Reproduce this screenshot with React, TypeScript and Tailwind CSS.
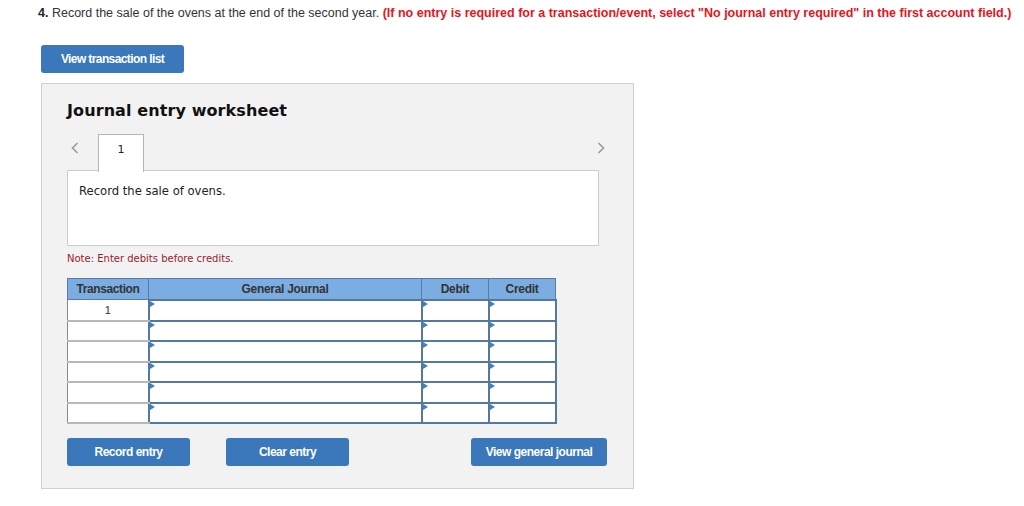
import React from "react";

const arial = { fontFamily: '"Liberation Sans", Arial, sans-serif' };

function InputCell({ w }: { w: string }) {
  return (
    <td className={`${w} p-0 border-2 border-[#55789f] bg-white relative`}>
      <span className="absolute left-0 top-0 w-0 h-0 border-t-[3px] border-b-[3px] border-l-[5px] border-t-transparent border-b-transparent border-l-[#3d7fca]" />
    </td>
  );
}

export default function App() {
  const rows = ["1", "", "", "", "", ""];
  return (
    <div className="w-[1024px] h-[506px] bg-white relative" style={arial}>
      <div className="pt-[6px] pl-[38px] text-[12.5px] leading-[14px] text-[#333] whitespace-nowrap">
        <b className="text-[#222]">4.</b> Record the sale of the ovens at the end of the second year.{" "}
        <b className="text-[#e8131c]">
          (If no entry is required for a transaction/event, select "No journal entry required" in the first account field.)
        </b>
      </div>

      <div className="pl-[41px] pt-[25px]">
        <button className="w-[143px] h-[28px] rounded-[3px] bg-[#3a77bb] text-white font-bold text-[12px] tracking-[-0.6px]">
          View transaction list
        </button>
      </div>

      <div className="ml-[41px] mt-[10px] w-[593px] h-[406px] bg-[#f2f2f2] border border-[#cfcfcf] pl-[25px] pt-[17px]">
        <div
          className="text-[16px] leading-[20px] font-bold text-[#111] tracking-[0.1px]"
          style={{ fontFamily: '"DejaVu Sans", Verdana, sans-serif' }}
        >
          Journal entry worksheet
        </div>

        <div className="relative mt-[13px] w-[532px] h-[37px]">
          <svg className="absolute left-[4px] top-[8px]" width="8" height="12" viewBox="0 0 8 12">
            <path d="M6.5 1 L1.5 6 L6.5 11" fill="none" stroke="#9a9a9a" strokeWidth="1.6" />
          </svg>
          <div
            className="absolute left-[31px] top-0 w-[46px] h-[38px] bg-white border border-[#b5b5b5] border-b-0 z-10 flex justify-center pt-[7px] text-[11px] text-[#222]"
            style={{ fontFamily: '"DejaVu Sans", Verdana, sans-serif' }}
          >
            1
          </div>
          <svg className="absolute left-[530px] top-[8px]" width="8" height="12" viewBox="0 0 8 12">
            <path d="M1.5 1 L6.5 6 L1.5 11" fill="none" stroke="#9a9a9a" strokeWidth="1.6" />
          </svg>
        </div>

        <div
          className="w-[532px] h-[76px] -mt-px bg-white border border-[#cccccc] pl-[11px] pt-[13px] text-[11.6px] leading-[14px] text-[#222]"
          style={{ fontFamily: '"DejaVu Sans", Verdana, sans-serif' }}
        >
          Record the sale of ovens.
        </div>

        <div
          className="mt-[7px] text-[10px] leading-[12px] text-[#9b1b30]"
          style={{ fontFamily: '"DejaVu Sans", Verdana, sans-serif' }}
        >
          Note: Enter debits before credits.
        </div>

        <table className="mt-[13px] border-collapse border border-[#8a8a8a]">
          <thead>
            <tr className="h-[21px]">
              <th className="w-[81px] p-0 bg-[#7bade2] border border-[#5b7ba2] text-[12px] font-bold text-[#333] tracking-[-0.4px]">
                Transaction
              </th>
              <th className="w-[273px] p-0 bg-[#7bade2] border border-[#5b7ba2] text-[12px] font-bold text-[#333] tracking-[-0.3px]">
                General Journal
              </th>
              <th className="w-[67px] p-0 bg-[#7bade2] border border-[#5b7ba2] text-[12px] font-bold text-[#333] tracking-[-0.3px]">
                Debit
              </th>
              <th className="w-[67px] p-0 bg-[#7bade2] border border-[#5b7ba2] text-[12px] font-bold text-[#333] tracking-[-0.3px]">
                Credit
              </th>
            </tr>
          </thead>
          <tbody>
            {rows.map((r, i) => (
              <tr key={i} className={i % 2 === 0 ? "h-[21px]" : "h-[20px]"}>
                <td className="w-[81px] p-0 bg-white border-x border-[#8a8a8a] border-b-2 border-b-[#b8b8b8] text-center text-[11px] text-[#333] align-top pt-[2px]">
                  {r}
                </td>
                <InputCell w="w-[273px]" />
                <InputCell w="w-[67px]" />
                <InputCell w="w-[67px]" />
              </tr>
            ))}
          </tbody>
        </table>

        <div className="mt-[14px] w-[540px] flex">
          <button className="w-[123px] h-[28px] rounded-[3px] bg-[#3a77bb] text-white font-bold text-[12px] tracking-[-0.5px]">
            Record entry
          </button>
          <button className="ml-[36px] w-[123px] h-[28px] rounded-[3px] bg-[#3a77bb] text-white font-bold text-[12px] tracking-[-0.5px]">
            Clear entry
          </button>
          <button className="ml-auto w-[136px] h-[28px] rounded-[3px] bg-[#3a77bb] text-white font-bold text-[12px] tracking-[-0.5px]">
            View general journal
          </button>
        </div>
      </div>
    </div>
  );
}
